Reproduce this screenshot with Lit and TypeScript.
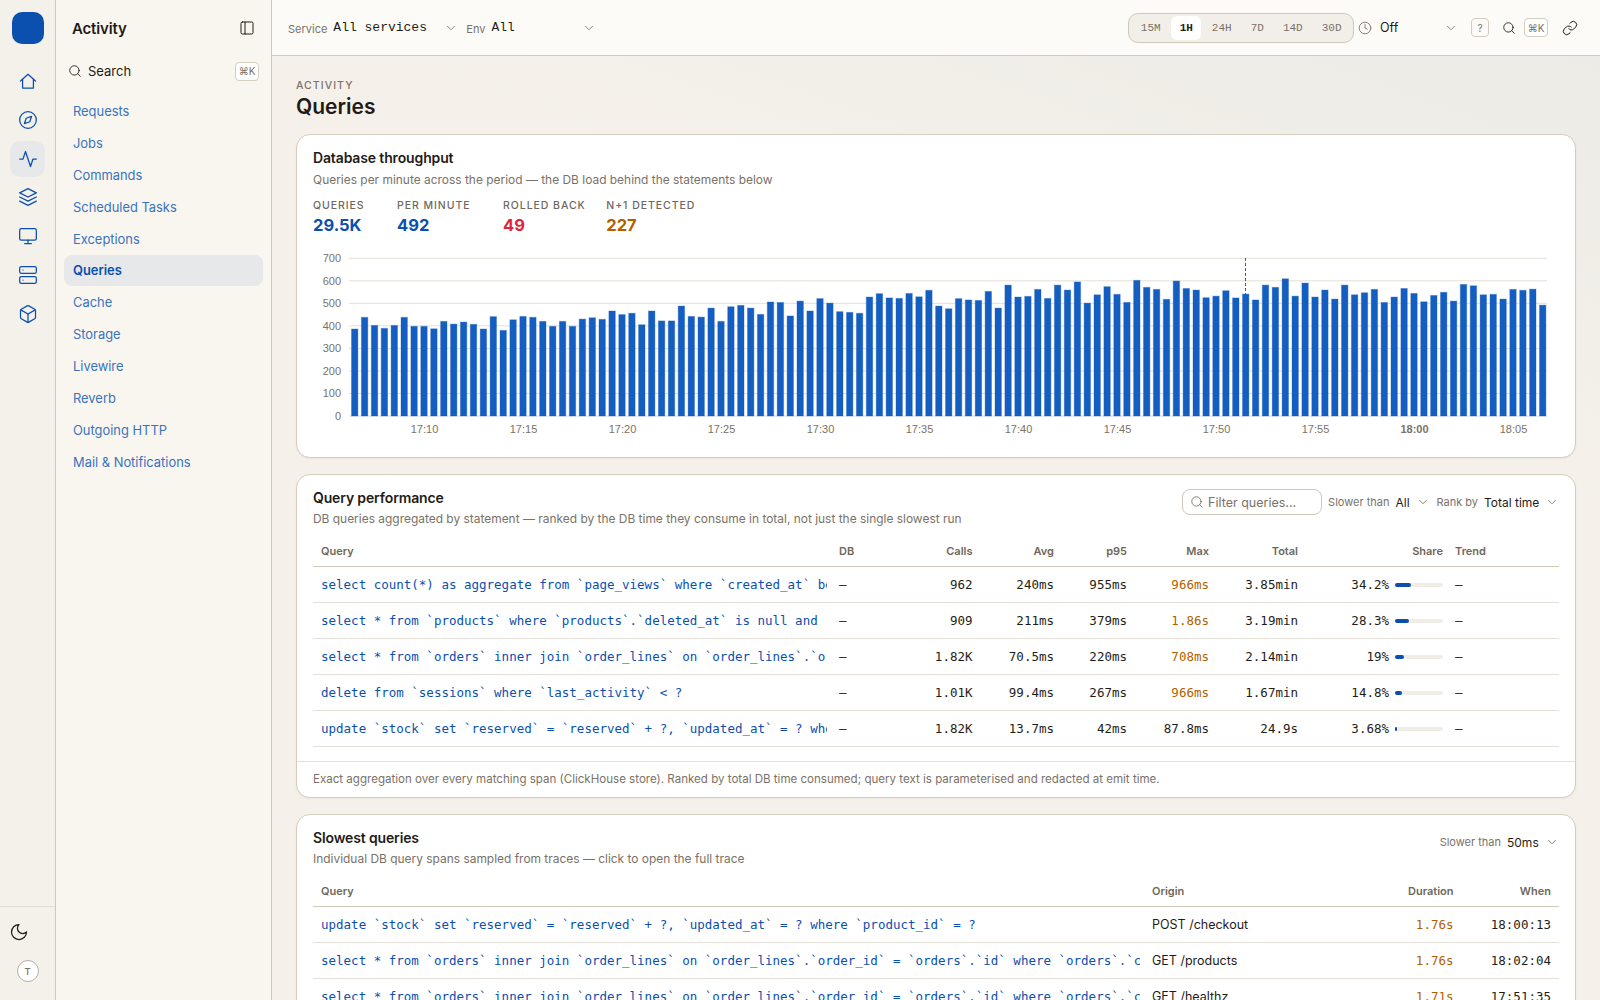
import {LitElement, html, css, svg} from 'lit';
import {customElement} from 'lit/decorators.js';

/** Queries per 30s bucket, read off the chart */
const BUCKETS = [
  386, 438, 402, 389, 402, 438, 398, 398, 387, 420, 408, 417, 407, 386, 441, 380, 427, 442, 438, 420,
  398, 420, 398, 430, 436, 429, 466, 450, 456, 405, 466, 422, 422, 488, 442, 439, 479, 420, 485, 491,
  479, 451, 506, 504, 444, 510, 466, 521, 501, 463, 460, 456, 528, 543, 524, 522, 544, 529, 558, 488,
  476, 521, 515, 513, 553, 479, 581, 528, 531, 562, 522, 581, 559, 595, 501, 538, 574, 540, 504, 602,
  571, 562, 518, 599, 566, 559, 525, 532, 556, 524, 541, 515, 581, 571, 609, 532, 590, 528, 559, 519,
  581, 538, 547, 562, 504, 528, 566, 544, 507, 535, 549, 510, 584, 578, 538, 540, 519, 562, 558, 563,
  492,
];

const TICKS = ['17:10', '17:15', '17:20', '17:25', '17:30', '17:35', '17:40', '17:45', '17:50', '17:55', '18:00', '18:05'];

const NAV = ['Requests', 'Jobs', 'Commands', 'Scheduled Tasks', 'Exceptions', 'Queries', 'Cache', 'Storage', 'Livewire', 'Reverb', 'Outgoing HTTP', 'Mail & Notifications'];

const PERF = [
  {q: 'select count(*) as aggregate from `page_views` where `created_at` between ? and ?', calls: '962', avg: '240ms', p95: '955ms', max: '966ms', slow: true, total: '3.85min', share: 34.2},
  {q: 'select * from `products` where `products`.`deleted_at` is null and rating > ?', calls: '909', avg: '211ms', p95: '379ms', max: '1.86s', slow: true, total: '3.19min', share: 28.3},
  {q: 'select * from `orders` inner join `order_lines` on `order_lines`.`order_id` = `orders`.`id`', calls: '1.82K', avg: '70.5ms', p95: '220ms', max: '708ms', slow: true, total: '2.14min', share: 19},
  {q: 'delete from `sessions` where `last_activity` < ?', calls: '1.01K', avg: '99.4ms', p95: '267ms', max: '966ms', slow: true, total: '1.67min', share: 14.8},
  {q: 'update `stock` set `reserved` = `reserved` + ?, `updated_at` = ? where `product_id` = ?', calls: '1.82K', avg: '13.7ms', p95: '42ms', max: '87.8ms', slow: false, total: '24.9s', share: 3.68},
];

const JOIN = 'select * from `orders` inner join `order_lines` on `order_lines`.`order_id` = `orders`.`id` where `orders`.`created_at` > ? order by `orders`.`id` desc';

const SLOWEST = [
  {q: 'update `stock` set `reserved` = `reserved` + ?, `updated_at` = ? where `product_id` = ?', origin: 'POST /checkout', dur: '1.76s', when: '18:00:13'},
  {q: JOIN, origin: 'GET /products', dur: '1.76s', when: '18:02:04'},
  {q: JOIN, origin: 'GET /healthz', dur: '1.71s', when: '17:51:35'},
];

const icon = (body: unknown, size = 20) => html`
  <svg class="ic" width=${size} height=${size} viewBox="0 0 24 24" fill="none" stroke="currentColor" stroke-width="1.5" stroke-linecap="round" stroke-linejoin="round">${body}</svg>`;

const RAIL = [
  svg`<path d="M3 12 12 4l9 8"/><path d="M5.5 10v10.5h13V10"/>`,
  svg`<circle cx="12" cy="12" r="10"/><polygon points="16.24 7.76 14.12 14.12 7.76 16.24 9.88 9.88"/>`,
  svg`<path d="M22 12h-4l-3 9L9 3l-3 9H2"/>`,
  svg`<path d="M12 2 2 7l10 5 10-5-10-5z"/><path d="m2 17 10 5 10-5"/><path d="m2 12 10 5 10-5"/>`,
  svg`<rect x="2" y="3" width="20" height="14" rx="2"/><path d="M8 21h8M12 17v4"/>`,
  svg`<rect x="2" y="2" width="20" height="8" rx="2"/><rect x="2" y="14" width="20" height="8" rx="2"/><path d="M6 6h.01M6 18h.01"/>`,
  svg`<path d="M21 8a2 2 0 0 0-1-1.73l-7-4a2 2 0 0 0-2 0l-7 4A2 2 0 0 0 3 8v8a2 2 0 0 0 1 1.73l7 4a2 2 0 0 0 2 0l7-4A2 2 0 0 0 21 16Z"/><path d="m3.3 7 8.7 5 8.7-5"/><path d="M12 22V12"/>`,
];

const CHEVRON = svg`<path d="m6 9 6 6 6-6"/>`;
const SEARCH = svg`<circle cx="11" cy="11" r="8"/><path d="m21 21-4.3-4.3"/>`;
const MOON = svg`<path d="M12 3a6 6 0 0 0 9 9 9 9 0 1 1-9-9Z"/>`;
const PANEL = svg`<rect x="3" y="3" width="18" height="18" rx="2"/><path d="M9 3v18"/>`;
const CLOCK = svg`<circle cx="12" cy="12" r="10"/><path d="M12 6v6l4 2"/>`;
const LINK = svg`<path d="M10 13a5 5 0 0 0 7.54.54l3-3a5 5 0 0 0-7.07-7.07l-1.72 1.71"/><path d="M14 11a5 5 0 0 0-7.54-.54l-3 3a5 5 0 0 0 7.07 7.07l1.71-1.71"/>`;

@customElement('app-root')
export class AppRoot extends LitElement {
  static styles = css`
  :host {
    color: #1f1c18;
    display: flex;
    font-family: Inter, sans-serif;
    height: 1000px;
    overflow: hidden;
  }
  .ic { display: block; flex: none; }
  .mono { font-family: "Liberation Mono", monospace; }
  .code { font-family: "DejaVu Sans Mono", monospace; }

  #rail {
    background: #f4f0ea;
    border-right: 1px solid #cfc8bb;
    color: #0b4fae;
    display: flex;
    flex: none;
    flex-direction: column;
    align-items: center;
    width: 55px;
  }
  #logo {
    background: #0b50ae;
    border-radius: 10px;
    height: 32px;
    margin: 12px 0 19px;
    width: 32px;
  }
  #rail-items { display: flex; flex-direction: column; gap: 2.8px; }
  .rail-item {
    align-items: center;
    border-radius: 10px;
    display: flex;
    height: 36px;
    justify-content: center;
    width: 35px;
  }
  .rail-item.on { background: #e7e8ea; }
  #rail-foot {
    align-items: center;
    border-top: 1px solid #e4dfd6;
    box-sizing: border-box;
    color: #1f1c18;
    display: flex;
    flex-direction: column;
    height: 94px;
    margin-top: auto;
    padding-top: 15px;
    width: 100%;
  }
  #moon { align-self: flex-start; margin-left: 9px; }
  #avatar {
    align-items: center;
    background: #fff;
    border: 1px solid #b9b1a3;
    border-radius: 50%;
    box-sizing: border-box;
    color: #7a7268;
    display: flex;
    font-size: 9.5px;
    font-weight: 500;
    height: 22px;
    justify-content: center;
    margin-top: 18px;
    width: 22px;
  }

  #side {
    background: #f9f6f0;
    border-right: 1px solid #cfc8bb;
    box-sizing: border-box;
    flex: none;
    padding: 0 8px;
    width: 216px;
  }
  #side-head {
    align-items: center;
    display: flex;
    font-size: 15px;
    font-weight: 600;
    height: 56px;
    justify-content: space-between;
    letter-spacing: -0.01em;
    padding: 0 8px;
  }
  #side-search {
    align-items: center;
    display: flex;
    font-size: 13px;
    gap: 6px;
    height: 24px;
    margin: 3px 0 13px;
    padding: 0 4px;
  }
  #side-search kbd { margin-left: auto; }
  kbd {
    align-items: center;
    background: #fff;
    border: 1px solid #d5cdbf;
    border-radius: 4px;
    box-sizing: border-box;
    color: #7a7268;
    display: flex;
    font-family: Inter, sans-serif;
    font-size: 10px;
    height: 19px;
    justify-content: center;
    width: 24px;
  }
  #nav { display: flex; flex-direction: column; gap: 1px; }
  .nav-item {
    align-items: center;
    border-radius: 8px;
    color: #3a73bd;
    display: flex;
    font-size: 12.9px;
    height: 30.9px;
    padding-left: 9px;
  }
  .nav-item.on { background: #e7e8ea; color: #0b4fae; font-weight: 600; }

  #content { display: flex; flex: 1; flex-direction: column; min-width: 0; }
  #top {
    align-items: center;
    background: #fcfbf8;
    border-bottom: 1px solid #cfc8bb;
    box-sizing: border-box;
    display: flex;
    flex: none;
    height: 56px;
    padding: 0 22px 0 16px;
  }
  .sel { align-items: center; display: flex; font-size: 12px; gap: 6px; }
  .sel .lab { color: #7a7268; font-size: 11px; }
  .sel .val { white-space: nowrap; }
  .sel .ic { color: #7a7268; }
  #top .sel .lab { padding-top: 3px; }
  #top .val.mono { font-size: 13px; }
  .svc .val { width: 105px; }
  .env { margin-left: 8px; }
  .env .val { width: 85px; }
  .all .val { width: 15px; }
  .rank .val { width: 55px; }
  .min .val { width: 32px; }
  #spacer { flex: 1; }
  #range {
    background: #f2efe8;
    border: 1px solid #cfc8bb;
    border-radius: 10px;
    box-sizing: border-box;
    display: flex;
    gap: 2px;
    height: 30px;
    padding: 2px 3px;
  }
  .rng {
    align-items: center;
    border-radius: 6px;
    color: #7a7268;
    display: flex;
    font-size: 11px;
    padding: 0 8.5px;
  }
  .rng.on { background: #fff; color: #1f1c18; font-weight: 600; }
  .off { font-size: 12.5px; gap: 8px; margin-left: 4px; }
  .off .val { width: 56px; }
  #help {
    align-items: center;
    border: 1px solid #d5cdbf;
    border-radius: 4px;
    box-sizing: border-box;
    color: #7a7268;
    display: flex;
    font-size: 10px;
    height: 19px;
    justify-content: center;
    margin-left: 13px;
    width: 18px;
  }
  #find { margin: 0 8px 0 13px; }
  #copy { margin-left: 14px; }

  #main {
    background: linear-gradient(200deg, #ecebe6 0, #f5f1ea 420px);
    box-sizing: border-box;
    flex: 1;
    overflow: hidden;
    padding: 23px 24px 0;
  }
  #eyebrow {
    color: #7a7268;
    font-size: 10.5px;
    font-weight: 500;
    letter-spacing: 0.1em;
    line-height: 14px;
  }
  h1 { font-size: 21px; font-weight: 600; line-height: 26px; margin: 1px 0 14px; }
  .card {
    background: #fff;
    border: 1px solid #d5cdbf;
    border-radius: 14px;
    box-shadow: 0 1px 2px rgba(60, 50, 30, 0.06);
    box-sizing: border-box;
    margin-bottom: 16px;
    padding: 13px 16px;
  }
  #thru { height: 324px; }
  #perf { height: 324px; padding-bottom: 0; }
  .head { display: flex; justify-content: space-between; }
  h2 { font-size: 14px; font-weight: 600; letter-spacing: -0.01em; line-height: 20px; margin: 0; }
  .sub { color: #7a7268; font-size: 11.95px; line-height: 18px; margin-top: 2px; }
  #thru .sub { margin-top: 3px; }
  .tools { align-items: center; display: flex; gap: 6px; height: 26px; margin-top: 1px; }
  #filter {
    align-items: center;
    border: 1px solid #cfc8bb;
    border-radius: 8px;
    box-sizing: border-box;
    color: #7a7268;
    display: flex;
    font-size: 12.5px;
    gap: 4px;
    height: 26px;
    padding-left: 7px;
    width: 140px;
  }

  #kpis { display: flex; gap: 32.5px; margin-top: 10px; }
  #kpis > :last-child { margin-left: -12px; }
  .kpi-lab {
    color: #6f675c;
    font-size: 10.5px;
    font-weight: 500;
    letter-spacing: 0.09em;
    line-height: 14px;
  }
  .kpi-val { font-size: 16.5px; font-weight: 700; line-height: 22px; margin-top: 1px; }
  .blue { color: #0b4fae; }
  .red { color: #e0243a; }
  .amber { color: #b25f00; }
  #chart { display: block; margin-top: 14px; }
  #chart text { fill: #7a7268; font-family: "Liberation Sans", sans-serif; font-size: 11px; }
  #chart text.b { font-weight: 700; }

  .row {
    align-items: center;
    border-bottom: 1px solid #e4dfd6;
    display: grid;
    font-size: 12.5px;
    height: 35px;
  }
  .row.hd {
    border-bottom-color: #cfc8bb;
    color: #6f675c;
    font-size: 11px;
    font-weight: 600;
    height: 30px;
    margin-top: 8px;
  }
  .perf-row { grid-template-columns: 518px 85px 64.5px 81.5px 73px 82px 89px 141px 1fr; }
  .slow-row { grid-template-columns: 831px 209px 108.5px 1fr; }
  .cell { overflow: hidden; padding: 0 8px; white-space: nowrap; }
  .cell.r { text-align: right; }
  .cell.q { color: #0b4fae; margin-right: 4px; padding-right: 0; }
  .cell.share { align-items: center; display: flex; gap: 6px; justify-content: flex-end; padding-right: 4px; }
  .track { background: #f0ede6; border-radius: 2px; height: 4px; width: 48px; }
  .fill { background: #0b4fae; border-radius: 2px; height: 100%; }
  #note {
    align-items: center;
    border-top: 1px solid #e4dfd6;
    box-sizing: border-box;
    color: #7a7268;
    display: flex;
    font-size: 11.55px;
    height: 36px;
    margin: 14px -16px 0;
    padding: 0 16px 2px;
  }
  `;

  chart() {
    const y = (v: number) => 416 - v * 0.2253;
    const marks = [0, 100, 200, 300, 400, 500, 600, 700];
    return html`
    <svg id="chart" width="1246" height="190" viewBox="313 250 1246 190">
      ${marks.map((m) => svg`
        <line x1="349" x2="1547" y1=${y(m)} y2=${y(m)} stroke="#e2dfd8"></line>
        <text x="341" y=${y(m) + 4} text-anchor="end">${m}</text>`)}
      ${BUCKETS.map((v, i) => svg`
        <rect x=${351.5 + i * 9.9} y=${y(v)} width="6.4" height=${v * 0.2253}
          fill="#145ec1" stroke="rgba(20, 94, 193, 0.35)"></rect>`)}
      <line x1="1245.5" x2="1245.5" y1="258" y2="416" stroke="#6b3fa0" stroke-dasharray="3 2"></line>
      ${TICKS.map((t, i) => svg`
        <text class=${t === '18:00' ? 'b' : ''} x=${424.5 + i * 99} y="433" text-anchor="middle">${t}</text>`)}
    </svg>`;
  }

  render() {
    return html`
    <div id="rail">
      <div id="logo"></div>
      <div id="rail-items">
        ${RAIL.map((r, i) => html`<div class="rail-item ${i === 2 ? 'on' : ''}">${icon(r)}</div>`)}
      </div>
      <div id="rail-foot">
        <div id="moon">${icon(MOON)}</div>
        <div id="avatar">T</div>
      </div>
    </div>

    <div id="side">
      <div id="side-head"><span>Activity</span>${icon(PANEL, 16)}</div>
      <div id="side-search">${icon(SEARCH, 14)}<span>Search</span><kbd>⌘K</kbd></div>
      <div id="nav">
        ${NAV.map((n) => html`<div class="nav-item ${n === 'Queries' ? 'on' : ''}">${n}</div>`)}
      </div>
    </div>

    <div id="content">
      <div id="top">
        <div class="sel svc"><span class="lab">Service</span><span class="val mono">All services</span>${icon(CHEVRON, 14)}</div>
        <div class="sel env"><span class="lab">Env</span><span class="val mono">All</span>${icon(CHEVRON, 14)}</div>
        <div id="spacer"></div>
        <div id="range" class="mono">
          ${['15M', '1H', '24H', '7D', '14D', '30D'].map((r) => html`<div class="rng ${r === '1H' ? 'on' : ''}">${r}</div>`)}
        </div>
        <div class="sel off">${icon(CLOCK, 14)}<span class="val">Off</span>${icon(CHEVRON, 14)}</div>
        <div id="help">?</div>
        <div id="find">${icon(SEARCH, 14)}</div>
        <kbd>⌘K</kbd>
        <div id="copy">${icon(LINK, 16)}</div>
      </div>

      <div id="main">
        <div id="eyebrow">ACTIVITY</div>
        <h1>Queries</h1>

        <div class="card" id="thru">
          <h2>Database throughput</h2>
          <div class="sub">Queries per minute across the period — the DB load behind the statements below</div>
          <div id="kpis">
            <div><div class="kpi-lab">QUERIES</div><div class="kpi-val blue">29.5K</div></div>
            <div><div class="kpi-lab">PER MINUTE</div><div class="kpi-val blue">492</div></div>
            <div><div class="kpi-lab">ROLLED BACK</div><div class="kpi-val red">49</div></div>
            <div><div class="kpi-lab">N+1 DETECTED</div><div class="kpi-val amber">227</div></div>
          </div>
          ${this.chart()}
        </div>

        <div class="card" id="perf">
          <div class="head">
            <div>
              <h2>Query performance</h2>
              <div class="sub">DB queries aggregated by statement — ranked by the DB time they consume in total, not just the single slowest run</div>
            </div>
            <div class="tools">
              <div id="filter">${icon(SEARCH, 14)}<span>Filter queries...</span></div>
              <div class="sel all"><span class="lab">Slower than</span><span class="val">All</span>${icon(CHEVRON, 14)}</div>
              <div class="sel rank"><span class="lab">Rank by</span><span class="val">Total time</span>${icon(CHEVRON, 14)}</div>
            </div>
          </div>
          <div class="row hd perf-row">
            <div class="cell">Query</div><div class="cell">DB</div><div class="cell r">Calls</div><div class="cell r">Avg</div>
            <div class="cell r">p95</div><div class="cell r">Max</div><div class="cell r">Total</div>
            <div class="cell r share">Share</div><div class="cell">Trend</div>
          </div>
          ${PERF.map((p) => html`
          <div class="row perf-row code">
            <div class="cell q">${p.q}</div>
            <div class="cell">—</div>
            <div class="cell r">${p.calls}</div>
            <div class="cell r">${p.avg}</div>
            <div class="cell r">${p.p95}</div>
            <div class="cell r ${p.slow ? 'amber' : ''}">${p.max}</div>
            <div class="cell r">${p.total}</div>
            <div class="cell share">
              <span>${p.share}%</span>
              <div class="track"><div class="fill" style="width: ${p.share}%"></div></div>
            </div>
            <div class="cell">—</div>
          </div>`)}
          <div id="note">Exact aggregation over every matching span (ClickHouse store). Ranked by total DB time consumed; query text is parameterised and redacted at emit time.</div>
        </div>

        <div class="card">
          <div class="head">
            <div>
              <h2>Slowest queries</h2>
              <div class="sub">Individual DB query spans sampled from traces — click to open the full trace</div>
            </div>
            <div class="tools">
              <div class="sel min"><span class="lab">Slower than</span><span class="val">50ms</span>${icon(CHEVRON, 14)}</div>
            </div>
          </div>
          <div class="row hd slow-row">
            <div class="cell">Query</div><div class="cell">Origin</div><div class="cell r">Duration</div><div class="cell r">When</div>
          </div>
          ${SLOWEST.map((s) => html`
          <div class="row slow-row">
            <div class="cell q code">${s.q}</div>
            <div class="cell">${s.origin}</div>
            <div class="cell r code amber">${s.dur}</div>
            <div class="cell r code">${s.when}</div>
          </div>`)}
        </div>
      </div>
    </div>
    `;
  }
}
